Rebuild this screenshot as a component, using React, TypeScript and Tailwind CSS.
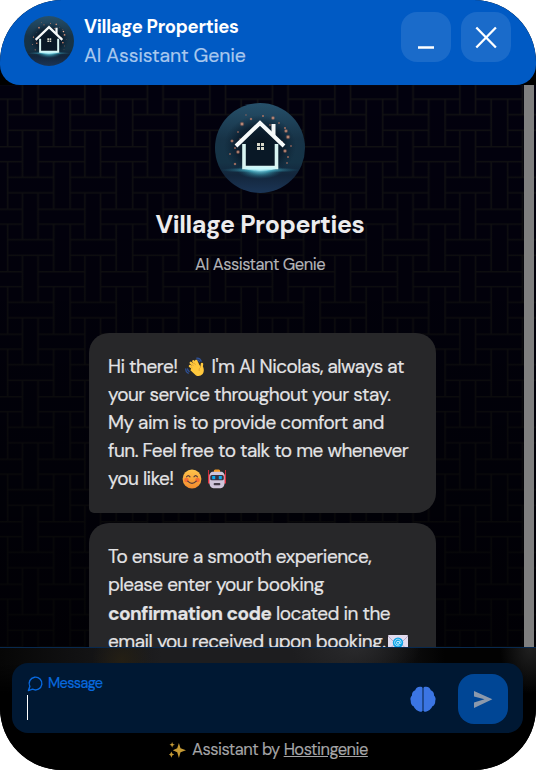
import React from "react";

function HouseAvatar({ className }: { className: string }) {
  const sparks = [
    [27, 21, 1.8], [36, 16, 1.2], [58, 15, 1.6], [70, 25, 1], [71, 28, 1.6], [73, 34, 1.8], [70, 48, 1.6],
    [17, 38, 1.4], [23, 49, 1.6], [20, 61, 1.2], [15, 51, 0.8], [31, 12, 0.7], [64, 20, 0.8], [73, 54, 0.9],
    [23, 29, 0.8], [48, 13, 1], [20, 45, 0.9], [67, 39, 0.9], [76, 43, 0.8], [25, 36, 0.7], [72, 60, 0.8], [55, 22, 0.8],
  ];
  return (
    <svg viewBox="0 0 90 90" className={className}>
      <defs>
        <linearGradient id="sky" x1="0" y1="0" x2="0" y2="1">
          <stop offset="0" stopColor="#26506a" />
          <stop offset="0.4" stopColor="#173347" />
          <stop offset="0.66" stopColor="#153346" />
          <stop offset="0.8" stopColor="#13263c" />
          <stop offset="1" stopColor="#1b3556" />
        </linearGradient>
        <radialGradient id="dusk">
          <stop offset="0" stopColor="#07121e" />
          <stop offset="0.65" stopColor="#091827" stopOpacity="0.75" />
          <stop offset="1" stopColor="#0c2233" stopOpacity="0" />
        </radialGradient>
        <radialGradient id="glow">
          <stop offset="0" stopColor="#a8f2ff" />
          <stop offset="0.4" stopColor="#4cbcd2" stopOpacity="0.8" />
          <stop offset="1" stopColor="#1d6e8a" stopOpacity="0" />
        </radialGradient>
        <radialGradient id="spark">
          <stop offset="0" stopColor="#ffd0ae" />
          <stop offset="0.4" stopColor="#c98068" stopOpacity="0.7" />
          <stop offset="1" stopColor="#a05c50" stopOpacity="0" />
        </radialGradient>
        <clipPath id="disc"><circle cx="45" cy="45" r="45" /></clipPath>
      </defs>
      <g clipPath="url(#disc)">
        <rect width="90" height="90" fill="url(#sky)" />
        <ellipse cx="45" cy="43" rx="36" ry="31" fill="url(#dusk)" />
        <ellipse cx="45" cy="67" rx="40" ry="3" fill="url(#glow)" opacity="0.7" />
        <ellipse cx="45" cy="67" rx="23" ry="9" fill="url(#glow)" opacity="0.75" />
        {sparks.map(([x, y, r], i) => (
          <circle key={i} cx={x} cy={y} r={r * 1.5} fill="url(#spark)" />
        ))}
        <path d="M29 41V64.5H61.5V41" fill="#091826" stroke="#d9f4f2" strokeWidth="3.6" />
        <path d="M56.5 21h4v12.5l-4-4z" fill="#f4f7f7" />
        <path d="M21 43 45 20 69 43" fill="none" stroke="#f7fafa" strokeWidth="4" />
        <path d="M42 40h3v3h-3zM46 40h3v3h-3zM42 44h3v3h-3zM46 44h3v3h-3z" fill="#d9d8cb" />
        <ellipse cx="45" cy="65.5" rx="16" ry="2" fill="#c3faff" opacity="0.7" />
      </g>
    </svg>
  );
}

function WeavePattern() {
  return (
    <svg className="absolute inset-0 h-full w-full">
      <defs>
        <pattern id="weave" width="62.5" height="62.5" x="6.8" y="-1.5" patternUnits="userSpaceOnUse">
          <g fill="none" stroke="#111113" strokeWidth="1.6">
            <path d="M0 31.25H46.9M0 46.9H46.9" />
            <path d="M-1 .8H15.6M31.25 .8H63M-1 15.6H15.6M31.25 15.6H63" />
            <path d="M15.6 0V31.25M15.6 46.9V63M31.25 0V31.25M31.25 46.9V63" />
            <path d="M46.9 15.6V63M.8 15.6V63" />
          </g>
        </pattern>
        <linearGradient id="fade" x1="0" y1="0" x2="0" y2="1">
          <stop offset="0" stopColor="#000" stopOpacity="0" />
          <stop offset="1" stopColor="#000" stopOpacity="0.65" />
        </linearGradient>
      </defs>
      <rect width="100%" height="100%" fill="#02010e" />
      <rect width="100%" height="100%" fill="url(#weave)" />
      <rect width="100%" height="100%" fill="url(#fade)" />
    </svg>
  );
}

function WaveEmoji() {
  return (
    <svg viewBox="0 0 20 20" className="mr-[6px] ml-[8px] inline-block size-5 align-[-4px]">
      <g fill="none" stroke="#2f5299" strokeWidth="1.3" strokeLinecap="round">
        <path d="M11.8 1.2q3.2-.2 4.4 3M12 3q1.7 0 2.6 1.7M.8 12q-.2 3 2.4 4.2M2.6 12q0 1.6 1.6 2.5" />
      </g>
      <g stroke="#ffc83d" strokeWidth="2.5" strokeLinecap="round">
        <path d="M11 11 5.8 5.8M12 9.5 8.4 4.2M13.5 9 11.2 4M10 13 5 9M16.3 12 17 7" />
      </g>
      <path d="M7 9.5 13 6.5 15.8 10 18 9.5Q19.8 14 17.7 17 14.8 20.2 11 18.5L5.4 13.2Z" fill="#ffc83d" />
      <path d="M8.8 9.2 6.5 6.8M10.7 8.1 9 5.6M7.5 11 6 9.8M15.8 10Q13.4 11.8 14.2 14" fill="none" stroke="#d8942f" strokeWidth=".6" />
    </svg>
  );
}

function SmileEmoji() {
  return (
    <svg viewBox="0 0 20 20" className="ml-[8px] inline-block size-5 align-[-4px]">
      <defs>
        <linearGradient id="face" x1="0" y1="0" x2="0" y2="1">
          <stop stopColor="#ffc44b" /><stop offset="1" stopColor="#f38b2d" />
        </linearGradient>
      </defs>
      <circle cx="10" cy="10" r="9.4" fill="url(#face)" />
      <circle cx="4.5" cy="11" r="2.3" fill="#f65e36" opacity=".75" />
      <circle cx="15.5" cy="11" r="2.3" fill="#f65e36" opacity=".75" />
      <path d="M4.6 7.8q1.6-2.5 3.4 0M12 7.8q1.6-2.5 3.4 0M5.7 12.2q4.3 4.3 8.6 0" fill="none" stroke="#553b3c" strokeWidth="1.2" strokeLinecap="round" />
    </svg>
  );
}

function RobotEmoji() {
  return (
    <svg viewBox="0 0 20 20" className="ml-[5px] inline-block size-5 align-[-4px]">
      <path d="M1.500 1v13M18.500 1v13" stroke="#cc2837" strokeWidth="1" />
      <path d="M1 5.500h2.500v9H1zM16.500 5.500H19v9h-2.500z" fill="#e0303f" />
      <rect x="6.8" y=".6" width="6.4" height="4" rx="1.5" fill="#f59b25" />
      <path d="M5 2.800h10q2.600 1 2.600 5v6.500q-.4 4.400-4 5H6.400q-3.600-.6-4-5V7.800q0-4 2.600-5" fill="#cfc5da" />
      <rect x="3.2" y="6.1" width="13.6" height="5.2" rx="1.6" fill="#38313f" />
      <path d="M5.200 7h3v3.300h-3zM11.800 7h3v3.300h-3z" fill="#08a9ee" />
      <rect x="6.7" y="14" width="6.6" height="2.2" rx=".8" fill="#433b48" />
    </svg>
  );
}

function MailEmoji() {
  return (
    <svg viewBox="0 0 20 16" className="ml-[2px] inline-block h-4 w-5 align-[-3px]">
      <rect width="20" height="16" rx="1" fill="#e2dcef" />
      <path d="m0 1 8.500 8.500q1.500 1.200 3 0L20 1M0 15l7-6M20 15l-7-6" fill="none" stroke="#b9abc9" strokeWidth="1" />
      <circle cx="10" cy="7.8" r="5.2" fill="#0fa4e8" />
      <circle cx="10" cy="7.8" r="1.5" fill="none" stroke="#c2edff" strokeWidth="1" />
      <path d="M11.700 6v2.300q1.400 1 1.500-.8a3.300 3.300 0 1 0-1.500 2.800" fill="none" stroke="#c2edff" strokeWidth=".8" />
    </svg>
  );
}

function Header() {
  return (
    <header className="relative z-10 flex h-[85px] shrink-0 rounded-b-[20px] bg-[#005ac4] pl-6">
      <HouseAvatar className="mt-4 size-[50px]" />
      <div className="ml-[10px] flex-1 pt-[14px]">
        <div className="h-[26px] text-[18.5px] leading-[26px] font-bold tracking-[-0.3px] whitespace-nowrap text-white">Village Properties</div>
        <div className="mt-[3px] h-[26px] text-[19.5px] leading-[26px] tracking-[-0.15px] whitespace-nowrap text-[#a9c8ee] [-webkit-text-stroke:0.2px]">AI Assistant Genie</div>
      </div>
      <div className="mt-3 mr-[25px] flex gap-[10px]">
        <button className="flex size-[50px] items-center justify-center rounded-[16px] bg-[#1a6bca]">
          <svg viewBox="0 0 50 50" className="size-[50px]"><path d="M17 35.500h16" stroke="#fff" strokeWidth="2.6" /></svg>
        </button>
        <button className="flex size-[50px] items-center justify-center rounded-[16px] bg-[#1a6bca]">
          <svg viewBox="0 0 50 50" className="size-[50px]"><path d="m15.300 15.500 19.600 20M34.900 15.500l-19.600 20" stroke="#fff" strokeWidth="2.3" /></svg>
        </button>
      </div>
    </header>
  );
}

const bubble = "w-[347px] shrink-0 rounded-[20px] rounded-bl-[5px] bg-[#272729] pl-[19px] text-[19px] tracking-[-0.5px] text-[#e3e3e5] whitespace-nowrap [-webkit-text-stroke:0.2px]";

function Messages() {
  return (
    <main className="relative h-[562px] shrink-0 overflow-hidden">
      <WeavePattern />
      <div className="relative flex h-full">
        <div className="flex w-[524px] flex-col">
          <div className="flex w-[520px] flex-col items-center pt-[18px]">
            <HouseAvatar className="size-[90px]" />
            <h1 className="mt-[14px] text-[25px] leading-[36px] font-bold tracking-[-0.4px] text-[#ececee]">Village Properties</h1>
            <p className="mt-[10px] text-[16.5px] leading-[24px] tracking-[-0.5px] text-[#b4b4b8] [-webkit-text-stroke:0.15px]">AI Assistant Genie</p>
          </div>
          <div className="mt-[56px] ml-[89px] flex flex-col gap-[10px]">
            <div className={bubble + " h-[180px] pt-5 leading-[28px]"}>
              <div className="h-7">Hi there!<WaveEmoji />I'm AI Nicolas, always at</div>
              <div className="h-7">your service throughout your stay.</div>
              <div className="h-7">My aim is to provide comfort and</div>
              <div className="h-7">fun. Feel free to talk to me whenever</div>
              <div className="h-7">you like!<SmileEmoji /><RobotEmoji /></div>
            </div>
            <div className={bubble + " h-[180px] pt-5 leading-[28.4px]"}>
              <div>To ensure a smooth experience,</div>
              <div>please enter your booking</div>
              <div><b>confirmation code</b> located in the</div>
              <div>email you received upon booking.<MailEmoji /></div>
            </div>
          </div>
        </div>
        <div className="w-[10px] bg-[#7f7f7f]" />
      </div>
    </main>
  );
}

function Footer() {
  return (
    <footer className="relative flex-1 border-t border-[#08294f] bg-black px-3">
      <div className="absolute inset-x-0 top-0 h-[50px] bg-[radial-gradient(ellipse_65px_34px_at_356px_0,#29292b,transparent),radial-gradient(ellipse_30px_46px_at_530px_0px,#202020,transparent),radial-gradient(ellipse_30px_28px_at_122px_12px,#241f14,transparent),linear-gradient(180deg,transparent_30%,#000_90%),linear-gradient(90deg,#060606,#1d1d1f_30%,#1d1d1f_65%,#020202_83%)]" />
      <div className="relative mt-[15px] flex h-[70px] w-[511px] rounded-[16px] bg-[#001833]">
        <div className="flex-1 pt-[10px] pl-[15px]">
          <div className="flex h-5 items-center text-[#0869df]">
            <svg viewBox="0 0 24 24" className="size-[17px]" fill="none" stroke="currentColor" strokeWidth="2" strokeLinecap="round" strokeLinejoin="round"><path d="M7.900 20A9 9 0 1 0 4 16.100L2 22Z" /></svg>
            <span className="ml-1 text-[14.5px] leading-5 tracking-[-0.65px] [-webkit-text-stroke:0.2px]">Message</span>
          </div>
          <div className="mt-[2px] h-[25px] w-px bg-white" />
        </div>
        <svg viewBox="0 0 26 26" className="mt-[23px] mr-[22px] size-[26px]">
          <path d="M12 1C8.500 0 5.700 1.600 5.200 4.300 3 5 1.800 7 2 9.400.4 10.800 0 13 .8 15c-.3 2.500 1 4.600 2.800 5.300C5 23.400 8.500 26.500 12 25.400Z" fill="#3b75e3" />
          <path d="M14 1c3.500-1 6.300.6 6.800 3.300C23 5 24.200 7 24 9.400c1.600 1.400 2 3.600 1.200 5.600.3 2.500-1 4.600-2.800 5.300C21 23.400 17.500 26.500 14 25.400Z" fill="#3b75e3" />
          <path d="M13 1.500v23.500" stroke="#1f4a92" strokeWidth="2" />
        </svg>
        <button className="mt-[11px] mr-[15px] size-[50px] rounded-[16px] bg-[#004695]">
          <svg viewBox="0 0 50 50" className="size-[50px]"><path d="m16 17 18.400 8.300L16 34v-5.600l10.500-3.100L16 22.500z" fill="#8b99ac" /></svg>
        </button>
      </div>
      <div className="relative mt-[5px] flex h-6 items-center pl-[157px] text-[16.5px] whitespace-nowrap text-[#a5a5a7]">
        <svg viewBox="0 0 18 18" className="mr-[6px] size-[17px]" fill="#c59a34">
          <path d="m10.500 1 1.700 5.700L18 8.800l-5.800 2L10.500 17l-1.800-6.200L4 8.800l4.700-2.100zM3.300 0l.8 2.200L6.200 3l-2.100.8-.8 2.200-.8-2.200L.5 3l2-.8zM2.500 10l.9 2.300 2.100 1-2.100 1-.9 2.400-.9-2.400-1.600-1 1.600-1z" />
        </svg>
        <span className="pt-px tracking-[-0.52px] [-webkit-text-stroke:0.15px]">Assistant by <span className="underline">Hostingenie</span></span>
      </div>
    </footer>
  );
}

export default function App() {
  return (
    <div className="h-[771px] w-[536px] bg-white font-['DM_Sans',Inter,sans-serif]">
      <div className="flex h-[770px] w-[536px] flex-col overflow-hidden rounded-[62px] bg-black">
        <Header />
        <Messages />
        <Footer />
      </div>
    </div>
  );
}
